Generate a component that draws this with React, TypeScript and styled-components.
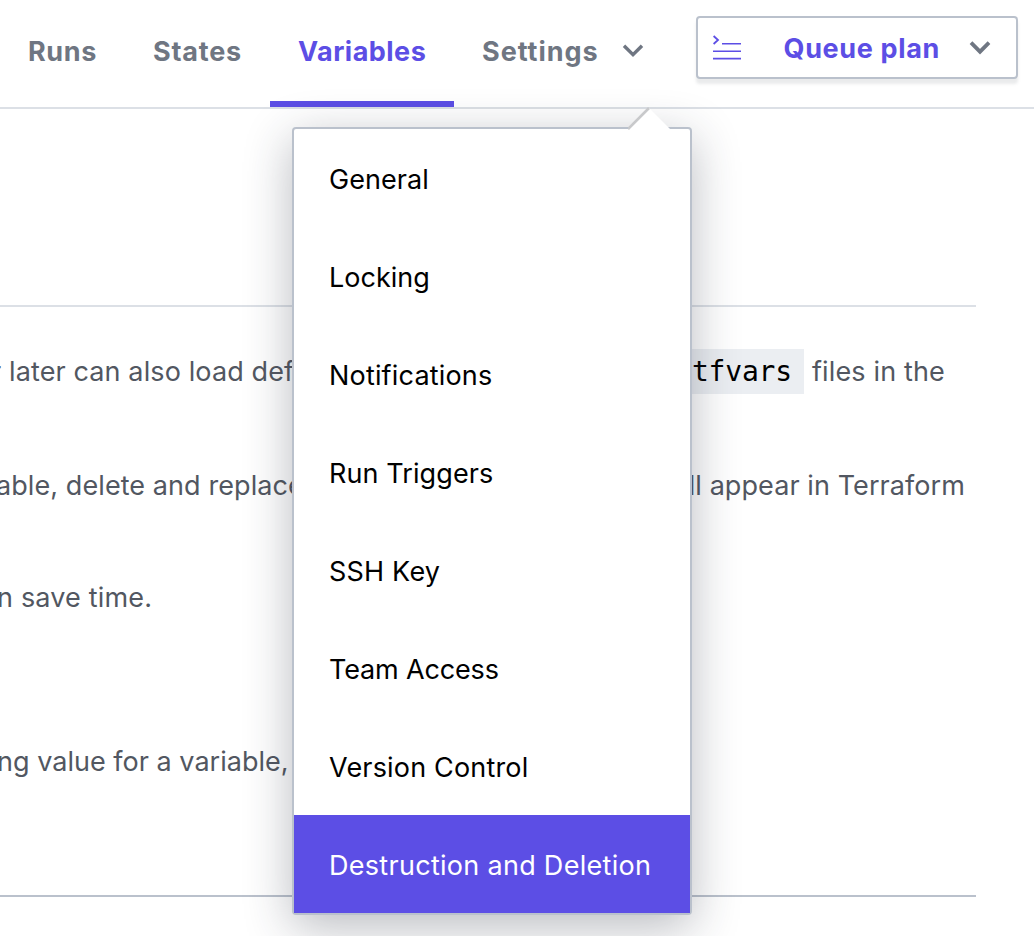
import React from "react";
import styled, { createGlobalStyle } from "styled-components";

const purple = "#5c4ee5";
const slate = "#6f7682";

const GlobalStyle = createGlobalStyle`
  *, *::before, *::after { box-sizing: border-box; }
  html, body { margin: 0; padding: 0; background: #fff; overflow: hidden; }
  body { font-family: Inter, "Liberation Sans", sans-serif; font-size: 27px; color: #525761; }
`;

const Page = styled.div`
  position: relative;
  width: 1034px;
  height: 936px;
  overflow: hidden;
  background: #fff;
`;

const Header = styled.header`
  display: flex;
  height: 109px;
  border-bottom: 2px solid #dce0e6;
`;

const Tab = styled.a<{ $width: number; $active?: boolean; $spacing: number }>`
  display: flex;
  align-items: center;
  flex: none;
  gap: 23px;
  width: ${(p) => p.$width}px;
  height: 107px;
  padding: 0 0 0 28px;
  border-bottom: 6px solid ${(p) => (p.$active ? purple : "transparent")};
  color: ${(p) => (p.$active ? purple : slate)};
  font-weight: 700;
  letter-spacing: ${(p) => p.$spacing}px;
  white-space: nowrap;
`;

const TabLabel = styled.span`
  padding-top: 2px;
`;

const QueueButton = styled.button`
  display: flex;
  align-items: center;
  flex: none;
  width: 322px;
  height: 63px;
  margin: 16px 16px 0 auto;
  padding: 0 25px 0 15px;
  border: 2px solid #bac1cc;
  border-radius: 4px;
  background: #fff;
  box-shadow: 0 5px 3px rgba(111, 118, 130, 0.15);
  color: ${purple};
  font: 700 27px Inter, "Liberation Sans", sans-serif;
`;

const QueueLabel = styled.span`
  flex: 1;
  padding: 2px 0 0 42.5px;
  letter-spacing: 0.65px;
  text-align: left;
  white-space: nowrap;
`;

const Content = styled.main`
  display: flex;
  flex-direction: column;
  width: 976px;
`;

const Rule = styled.hr<{ $top: number; $dark?: boolean }>`
  width: 100%;
  height: 2px;
  margin: ${(p) => p.$top}px 0 0;
  border: 0;
  background: ${(p) => (p.$dark ? "#bac1cc" : "#dce0e6")};
`;

const Line = styled.p<{ $top: number }>`
  display: flex;
  justify-content: space-between;
  align-items: center;
  height: 44px;
  margin: ${(p) => p.$top}px 0 0;
  line-height: 44px;
  white-space: pre;
`;

const Lead = styled.span<{ $shift: number; $spacing: number }>`
  margin-left: ${(p) => p.$shift}px;
  letter-spacing: ${(p) => p.$spacing}px;
`;

const Trail = styled.span<{ $inset: number; $spacing: number }>`
  display: flex;
  margin-right: ${(p) => p.$inset}px;
  letter-spacing: ${(p) => p.$spacing}px;
`;

const Code = styled.code`
  height: 45px;
  margin: -1px 8px 0 0;
  padding: 0 12px;
  background: #ebeef2;
  color: #000;
  font: 28px/46px "DejaVu Sans Mono", monospace;
  letter-spacing: -0.2px;
`;

const Menu = styled.nav`
  position: absolute;
  left: 292px;
  top: 127px;
  width: 400px;
  border: 2px solid #bac1cc;
  border-radius: 4px;
  background: #fff;
  box-shadow: 0 12px 48px rgba(37, 45, 60, 0.32);
`;

const Pointer = styled.svg`
  position: absolute;
  right: 20px;
  top: -22px;
`;

const MenuItem = styled.a<{ $selected?: boolean; $spacing: number }>`
  display: flex;
  align-items: center;
  height: 98px;
  padding: 3px 0 0 35px;
  background: ${(p) => (p.$selected ? purple : "transparent")};
  color: ${(p) => (p.$selected ? "#fff" : "#000")};
  letter-spacing: ${(p) => p.$spacing}px;
  white-space: nowrap;
`;

const Chevron = ({ stroke = 3.4 }: { stroke?: number }) => (
  <svg width="22" height="14" viewBox="0 0 22 14" fill="none">
    <path d="M2 1.7 11 10.7 20 1.7" stroke={slate} strokeWidth={stroke} />
  </svg>
);

const PlanIcon = () => (
  <svg width="28" height="26" viewBox="0 0 28 26" fill="none" stroke={purple} strokeWidth="1.6">
    <path d="M.6 1 5 5 .6 9" strokeWidth="1.8" />
    <path d="M9 8.7h19M0 16.2h28M0 23.6h28" />
  </svg>
);

const menuItems = [
  { label: "General", spacing: 0.05 },
  { label: "Locking", spacing: 0 },
  { label: "Notifications", spacing: 0.18 },
  { label: "Run Triggers", spacing: 0.1 },
  { label: "SSH Key", spacing: 0.2 },
  { label: "Team Access", spacing: -0.15 },
  { label: "Version Control", spacing: 0.17 },
  { label: "Destruction and Deletion", spacing: 0.29 },
];

export default function App() {
  return (
    <>
      <GlobalStyle />
      <Page>
        <Header>
          <Tab $width={125} $spacing={0.6}><TabLabel>Runs</TabLabel></Tab>
          <Tab $width={145} $spacing={0.8}><TabLabel>States</TabLabel></Tab>
          <Tab $width={184} $spacing={0.48} $active><TabLabel>Variables</TabLabel></Tab>
          <Tab $width={220} $spacing={0.95}><TabLabel>Settings</TabLabel><Chevron /></Tab>
          <QueueButton>
            <PlanIcon />
            <QueueLabel>Queue plan</QueueLabel>
            <Chevron stroke={3.8} />
          </QueueButton>
        </Header>
        <Content>
          <Rule $top={196} />
          <Line $top={43}>
            <Lead $shift={-9} $spacing={0.12}>r later can also load def</Lead>
            <Trail $inset={31} $spacing={0.15}><Code>tfvars</Code>files in the</Trail>
          </Line>
          <Line $top={70}>
            <Lead $shift={-4} $spacing={0.08}>able, delete and replace</Lead>
            <Trail $inset={11} $spacing={0.08}>will appear in Terraform</Trail>
          </Line>
          <Line $top={68}>
            <Lead $shift={-3} $spacing={0.17}>n save time.</Lead>
          </Line>
          <Line $top={120}>
            <Lead $shift={-3} $spacing={0.02}>ng value for a variable,</Lead>
          </Line>
          <Rule $top={111} $dark />
        </Content>
        <Menu>
          <Pointer width="42" height="23" viewBox="0 0 42 23">
            <path d="M0 22 21 1 42 22V23H0Z" fill="#fff" />
            <path d="M0 22 21 1" stroke="#c8c9cb" strokeWidth="2.6" />
          </Pointer>
          {menuItems.map((item, i) => (
            <MenuItem key={item.label} $spacing={item.spacing} $selected={i === menuItems.length - 1}>
              {item.label}
            </MenuItem>
          ))}
        </Menu>
      </Page>
    </>
  );
}
